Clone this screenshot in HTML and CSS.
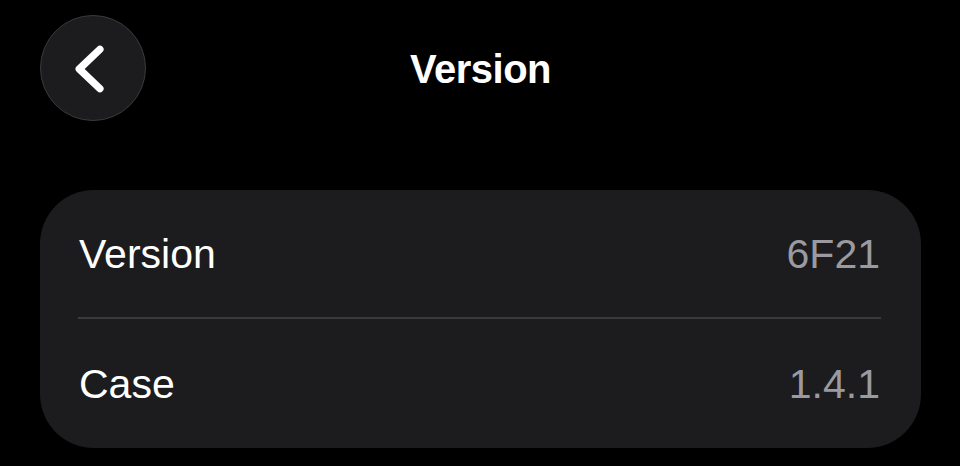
FILE: index.html
```html
<!DOCTYPE html>
<html>
<head>
<meta charset="utf-8">
<link rel="stylesheet" href="styles.css">
</head>
<body>
<div class="screen">
  <header class="nav">
    <button class="back" aria-label="Back">
      <svg width="106" height="106" viewBox="0 0 106 106">
        <path d="M60 34 L39 54 L60 74" fill="none" stroke="#fff" stroke-width="7.5" stroke-linecap="round" stroke-linejoin="round"/>
      </svg>
    </button>
    <h1 class="title">Version</h1>
    <div class="spacer"></div>
  </header>
  <section class="card">
    <div class="row">
      <span class="label">Version</span>
      <span class="value">6F21</span>
    </div>
    <div class="sep"></div>
    <div class="row">
      <span class="label">Case</span>
      <span class="value">1.4.1</span>
    </div>
  </section>
</div>
</body>
</html>
```

FILE: styles.css
```css
html, body {
  margin: 0;
  padding: 0;
  background: #000;
}
body {
  font-family: "Liberation Sans", Arial, sans-serif;
  color: #fff;
}
.screen {
  padding: 15px 39px 0 40px;
}
.nav {
  display: grid;
  grid-template-columns: 106px 1fr 106px;
  align-items: center;
  height: 106px;
}
.back {
  width: 106px;
  height: 106px;
  border-radius: 50%;
  background: #1c1c1e;
  border: 1.5px solid #3a3a3c;
  padding: 0;
  margin: 0;
  display: flex;
  align-items: center;
  justify-content: center;
  box-sizing: border-box;
}
.back svg {
  display: block;
}
.title {
  margin: 0;
  padding-top: 2px;
  text-align: center;
  font-size: 40px;
  font-weight: 700;
  letter-spacing: -0.5px;
}
.card {
  margin-top: 69px;
  background: #1c1c1e;
  border-radius: 54px;
  height: 258px;
  display: flex;
  flex-direction: column;
}
.row {
  height: 127px;
  display: flex;
  align-items: center;
  justify-content: space-between;
  padding: 2px 41px 0 39px;
  box-sizing: border-box;
  font-size: 41px;
}
.row + .sep + .row {
  height: 129px;
}
.label {
  color: #fff;
}
.value {
  color: #9a9aa0;
}
.sep {
  height: 2px;
  background: #3a3a3d;
  margin: 0 40px 0 38px;
}
```
